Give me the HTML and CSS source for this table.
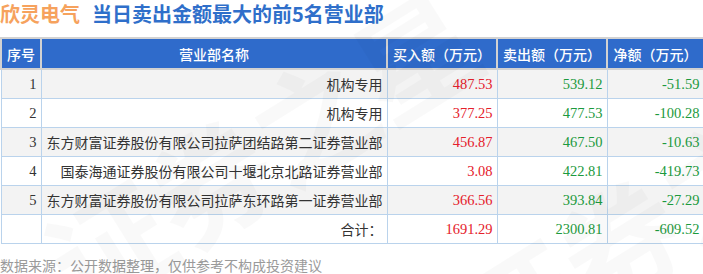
FILE: index.html
```html
<!DOCTYPE html>
<html lang="zh-CN">
<head>
  <meta charset="UTF-8" />
  <meta name="viewport" content="width=device-width, initial-scale=1.0"/>
  <title>欣灵电气 当日卖出金额最大的前5名营业部</title>
  <link rel="stylesheet" href="styles.css">
</head>
<body>
  <div class="page">
    <h1 class="title">
      <span class="stock">欣灵电气</span>
      <span class="subject">当日卖出金额最大的前5名营业部</span>
    </h1>

    <table class="board">
      <colgroup>
        <col class="col-no">
        <col class="col-name">
        <col class="col-num">
        <col class="col-num">
        <col class="col-net">
      </colgroup>
      <thead>
        <tr>
          <th>序号</th>
          <th>营业部名称</th>
          <th>买入额（万元）</th>
          <th>卖出额（万元）</th>
          <th>净额（万元）</th>
        </tr>
      </thead>
      <tbody>
        <tr>
          <td class="no">1</td>
          <td class="name">机构专用</td>
          <td class="buy">487.53</td>
          <td class="sell">539.12</td>
          <td class="net">-51.59</td>
        </tr>
        <tr>
          <td class="no">2</td>
          <td class="name">机构专用</td>
          <td class="buy">377.25</td>
          <td class="sell">477.53</td>
          <td class="net">-100.28</td>
        </tr>
        <tr>
          <td class="no">3</td>
          <td class="name">东方财富证券股份有限公司拉萨团结路第二证券营业部</td>
          <td class="buy">456.87</td>
          <td class="sell">467.50</td>
          <td class="net">-10.63</td>
        </tr>
        <tr>
          <td class="no">4</td>
          <td class="name">国泰海通证券股份有限公司十堰北京北路证券营业部</td>
          <td class="buy">3.08</td>
          <td class="sell">422.81</td>
          <td class="net">-419.73</td>
        </tr>
        <tr>
          <td class="no">5</td>
          <td class="name">东方财富证券股份有限公司拉萨东环路第一证券营业部</td>
          <td class="buy">366.56</td>
          <td class="sell">393.84</td>
          <td class="net">-27.29</td>
        </tr>
        <tr class="total">
          <td class="no"></td>
          <td class="name">合计：</td>
          <td class="buy">1691.29</td>
          <td class="sell">2300.81</td>
          <td class="net">-609.52</td>
        </tr>
      </tbody>
    </table>

    <p class="source">数据来源：公开数据整理，仅供参考不构成投资建议</p>

    <!-- watermark -->
    <div class="mark mark-left">证券之星</div>
    <div class="mark mark-right">证券之星</div>
  </div>
</body>
</html>
```

FILE: styles.css
```css
body {
  margin: 0;
  background: #ffffff;
  font-family: "Noto Sans CJK SC", "Microsoft YaHei", sans-serif;
  color: #333333;
}

.page {
  position: relative;
  width: 703px;
  height: 274px;
  overflow: hidden;
}

.title {
  margin: 0;
  height: 37px;
  font-size: 20px;
  font-weight: bold;
  line-height: 28px;
  display: flex;
  gap: 12px;
  white-space: nowrap;
}

.stock {
  color: #f6a25d;
}

.subject {
  color: #2f6fca;
}

.board {
  width: 703px;
  table-layout: fixed;
  border-collapse: collapse;
  font-size: 14px;
}

.col-no {
  width: 40px;
}

.col-name {
  width: 346px;
}

.col-num {
  width: 110px;
}

.col-net {
  width: 97px;
}

.board th {
  height: 29px;
  padding: 0;
  background: #2f6bcb;
  color: #ffffff;
  font-weight: 500;
  text-align: center;
  white-space: nowrap;
  border: 2px solid #d2d2d2;
}

.board td {
  height: 28px;
  padding: 0 4px;
  border: 1px solid #bad3ec;
  text-align: right;
  white-space: nowrap;
}

.board tbody tr:nth-child(odd) {
  background: #f3f3f3;
}

.board tbody tr.total {
  background: #ffffff;
}

.no,
.buy,
.sell,
.net {
  font-family: "Liberation Serif", serif;
  font-size: 14.5px;
}

.name {
  color: #333333;
}

.buy {
  color: #e5202b;
}

.sell,
.net {
  color: #1c9a3d;
}

.source {
  margin: 10px 0 0;
  font-size: 14px;
  line-height: 22px;
  color: #9a9a9a;
}

.mark {
  position: absolute;
  font-size: 120px;
  font-weight: bold;
  color: rgba(0, 0, 0, 0.025);
  white-space: nowrap;
  transform: rotate(-32deg);
  pointer-events: none;
}

.mark-left {
  left: 20px;
  top: 60px;
}

.mark-right {
  left: 430px;
  top: 120px;
}
```
